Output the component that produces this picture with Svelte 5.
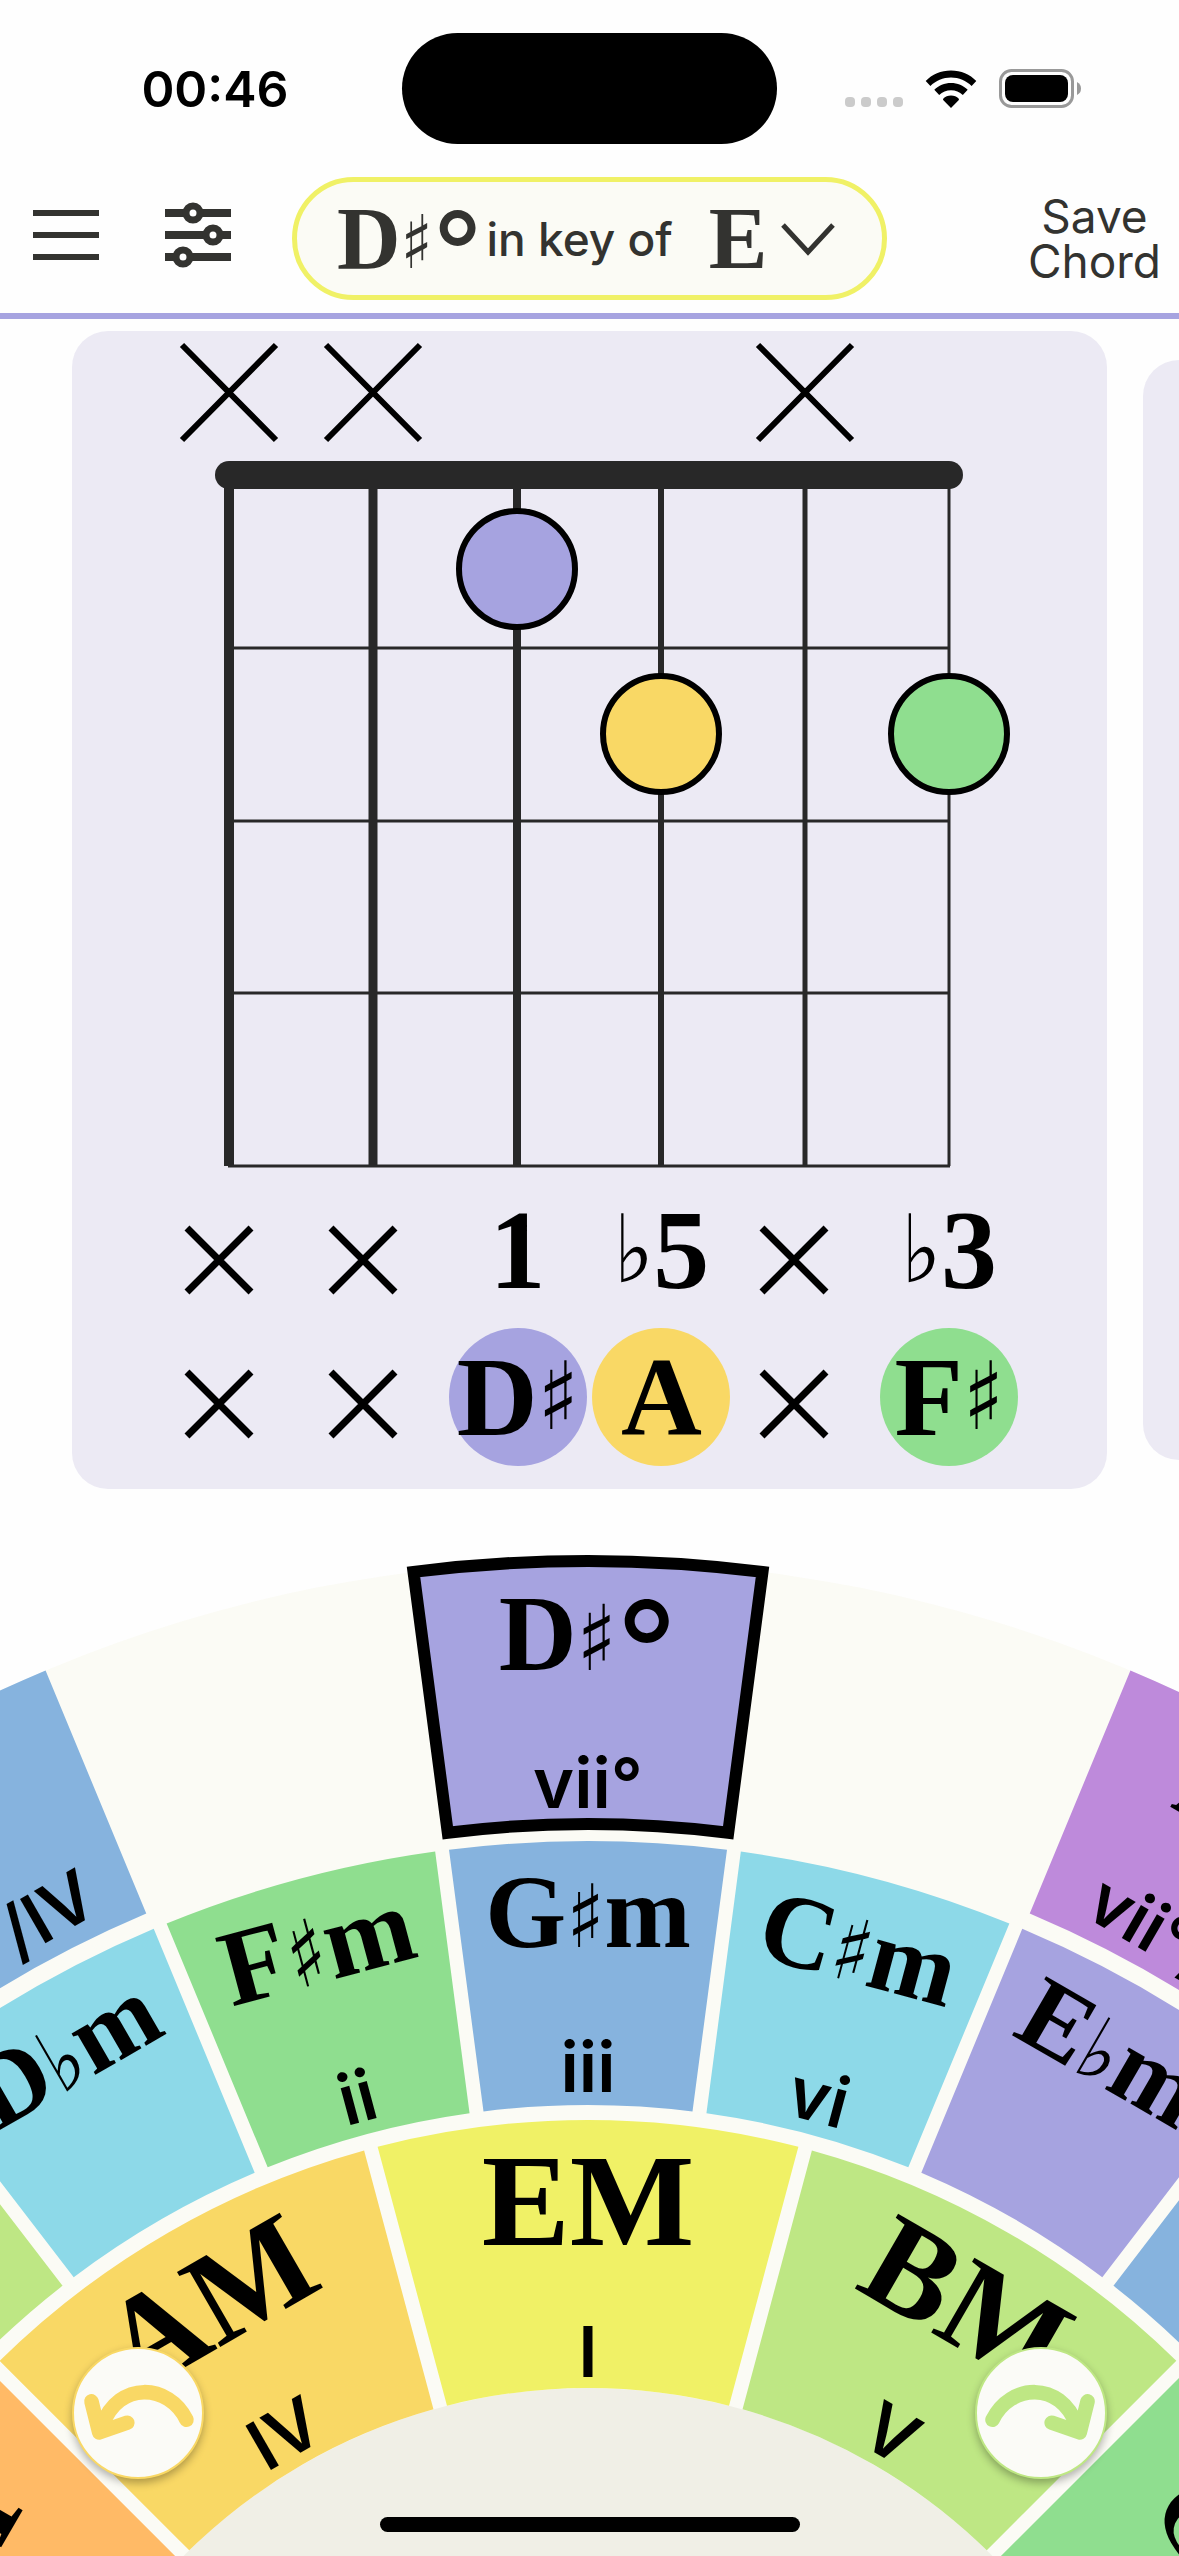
<script>
  const colors = {
    blue: '#86b3de',
    green: '#8fde8f',
    cyan: '#8dd9e8',
    purple: '#a6a3e0',
    yellow: '#f0f166',
    amber: '#f9d865',
    lime: '#bee784',
    orange: '#ffba66',
    violet: '#be8adb'
  };

  // Fretboard
  const strings = [10, 9, 8, 6, 5, 3].map((width, i) => ({ x: 157 + i * 144, width }));
  const frets = [317, 490, 662, 835];
  const muted = [157, 301, 733];
  const fingers = [
    { x: 445, y: 238, color: colors.purple },
    { x: 589, y: 403, color: colors.amber },
    { x: 877, y: 403, color: colors.green }
  ];
  const degrees = [null, null, '1', '♭5', null, '♭3'];
  const notes = [
    null,
    null,
    { name: 'D♯', tone: 'purple' },
    { name: 'A', tone: 'amber' },
    null,
    { name: 'F♯', tone: 'green' }
  ];

  // Chord wheel: rings share the origin as their centre
  const rings = {
    outer: { r0: 1135, r1: 1398, half: 7.5, gap: 8, nameY: -1289, romanY: -1151 },
    middle: { r0: 854, r1: 1118, half: 7.5, gap: 7, nameY: -1012, romanY: -867 },
    inner: { r0: 571, r1: 839, half: 15, gap: 7, nameY: -714, romanY: -582 }
  };
  const segments = [
    { ring: 'inner', angle: -60, color: colors.orange, name: 'DM', size: 'xl' },
    { ring: 'inner', angle: -30, color: colors.amber, name: 'AM', roman: 'IV', size: 'xl' },
    { ring: 'inner', angle: 0, color: colors.yellow, name: 'EM', roman: 'I', size: 'xl' },
    { ring: 'inner', angle: 30, color: colors.lime, name: 'BM', roman: 'V', size: 'xl' },
    { ring: 'inner', angle: 60, color: colors.green, name: 'G♭M', size: 'lg' },
    { ring: 'middle', angle: -45, color: colors.lime },
    { ring: 'middle', angle: -30, color: colors.cyan, name: 'D♭m', size: 'md' },
    { ring: 'middle', angle: -15, color: colors.green, name: 'F♯m', roman: 'ii', size: 'lg' },
    { ring: 'middle', angle: 0, color: colors.blue, name: 'G♯m', roman: 'iii', size: 'md' },
    { ring: 'middle', angle: 15, color: colors.cyan, name: 'C♯m', roman: 'vi', size: 'md' },
    { ring: 'middle', angle: 30, color: colors.purple, name: 'E♭m', size: 'md' },
    { ring: 'middle', angle: 45, color: colors.blue },
    { ring: 'outer', angle: -30, color: colors.blue, roman: 'vii°/IV' },
    { ring: 'outer', angle: 30, color: colors.violet, name: 'A♯°', roman: 'vii°/V', size: 'sm' },
    { ring: 'outer', angle: 0, color: colors.purple, name: 'D♯°', roman: 'vii°', size: 'lg', selected: true }
  ];

  function wedge({ r0, r1, half, gap }) {
    const at = (r, side) => {
      const a = ((half * Math.PI) / 180 - Math.asin(gap / r)) * side;
      return `${(r * Math.sin(a)).toFixed(1)} ${(-r * Math.cos(a)).toFixed(1)}`;
    };
    return `M${at(r1, -1)} A${r1} ${r1} 0 0 1 ${at(r1, 1)} L${at(r0, 1)} A${r0} ${r0} 0 0 0 ${at(r0, -1)} Z`;
  }

  const kinds = { '♯': 'acc', '♭': 'acc', '°': 'ring' };
  const parts = (text) =>
    text
      .split(/([♯♭°])/)
      .filter(Boolean)
      .map((t) => ({ t, kind: kinds[t] ?? 'plain' }));
</script>

{#snippet label(text)}{#each parts(text) as p}<span class={p.kind}>{p.t}</span>{/each}{/snippet}

{#snippet cross()}
  <svg class="cross" viewBox="0 0 70 70" role="img" aria-label="muted">
    <path d="M3 3 L67 67 M67 3 L3 67" />
  </svg>
{/snippet}

<div class="app">
  <div class="status">
    <div class="side time">00:46</div>
    <div class="island"></div>
    <div class="side icons">
      <svg width="58" height="38" viewBox="0 0 58 38" aria-hidden="true">
        {#each [0, 16, 32, 48] as x}
          <rect {x} y="27" width="10" height="10" rx="4" fill="#cbcbcb" />
        {/each}
      </svg>
      <svg width="52" height="38" viewBox="0 0 52 38" aria-hidden="true">
        <path d="M26 0.5 C36 0.5 45 4.4 51.3 11 L46.6 16 C41.2 10.8 34 7.6 26 7.6 C18 7.6 10.8 10.8 5.4 16 L0.7 11 C7 4.4 16 0.5 26 0.5 Z" />
        <path d="M26 13 C32.5 13 38.4 15.6 42.7 19.8 L37.8 25 C34.7 22.1 30.5 20.3 26 20.3 C21.5 20.3 17.3 22.1 14.2 25 L9.3 19.8 C13.6 15.6 19.5 13 26 13 Z" />
        <path d="M26 25.5 C29 25.5 31.8 26.7 33.8 28.7 Q34.3 29.5 33.6 30.2 L26 38 L18.4 30.2 Q17.7 29.5 18.2 28.7 C20.2 26.7 23 25.5 26 25.5 Z" />
      </svg>
      <svg width="82" height="40" viewBox="0 0 82 40" aria-hidden="true">
        <rect x="1.5" y="1.5" width="72" height="36" rx="11" fill="none" stroke="#999" stroke-width="3" />
        <rect x="6" y="6" width="63" height="27" rx="8" />
        <path d="M78 13 Q82 15 82 19.5 Q82 24 78 26 Z" fill="#999" />
      </svg>
    </div>
  </div>

  <header>
    <button class="icon" aria-label="Menu">
      <svg width="66" height="66" viewBox="0 0 66 66">
        <path d="M0 11 H66 M0 33 H66 M0 55 H66" stroke="#333330" stroke-width="6" />
      </svg>
    </button>
    <button class="icon" aria-label="Settings">
      <svg width="66" height="66" viewBox="0 0 66 66" overflow="visible">
        <path d="M0 11 H66 M0 33 H66 M0 55 H66" stroke="#333330" stroke-width="8" />
        <g fill="#fff" stroke="#333330" stroke-width="7">
          <circle cx="28" cy="11" r="7" />
          <circle cx="48" cy="33" r="7" />
          <circle cx="18" cy="55" r="7" />
        </g>
      </svg>
    </button>
    <button class="key">
      <span class="chord">{@render label('D♯°')}</span>
      <span class="words">in key of</span>
      <span class="chord">E</span>
      <svg class="chevron" width="56" height="36" viewBox="0 0 56 36" aria-hidden="true">
        <path d="M3 4 L28 31 L53 4" fill="none" stroke="#333330" stroke-width="5" />
      </svg>
    </button>
    <button class="save">Save<br />Chord</button>
  </header>

  <main>
    <section class="cards">
      <article class="card">
        <svg class="board" viewBox="0 0 1035 857" role="img" aria-label="Chord diagram">
          {#each muted as x}
            <path d="M{x - 47} 14 L{x + 47} 109 M{x + 47} 14 L{x - 47} 109" stroke="#000" stroke-width="6" />
          {/each}
          {#each strings as s}
            <path d="M{s.x} 144 V835" stroke="#282828" stroke-width={s.width} />
          {/each}
          {#each frets as y}
            <path d="M156 {y} H878" stroke="#282828" stroke-width="3" />
          {/each}
          <rect x="143" y="130" width="748" height="28" rx="14" fill="#282828" />
          {#each fingers as f}
            <circle cx={f.x} cy={f.y} r="58" fill={f.color} stroke="#000" stroke-width="6" />
          {/each}
        </svg>
        <div class="row degrees">
          {#each degrees as d}
            {#if d}
              <div class="cell degree">{@render label(d)}</div>
            {:else}
              <div class="cell mute">{@render cross()}</div>
            {/if}
          {/each}
        </div>
        <div class="row notes">
          {#each notes as n}
            {#if n}
              <div class="cell"><div class="note {n.tone}">{@render label(n.name)}</div></div>
            {:else}
              <div class="cell mute">{@render cross()}</div>
            {/if}
          {/each}
        </div>
      </article>
      <article class="card next" aria-label="Next voicing"></article>
    </section>

    <section class="wheel">
      <svg class="dial" viewBox="-588 -1419 1179 1016" role="img" aria-label="Chord wheel">
        <circle r="1398" fill="#fbfbf5" />
        <circle r="571" fill="#f0efe6" />
        {#each segments as s}
          {@const ring = rings[s.ring]}
          <g transform="rotate({s.angle})">
            <path class:selected={s.selected} d={wedge(ring)} fill={s.color} />
            {#if s.name}
              <text class="name {s.size}" y={ring.nameY}>{#each parts(s.name) as p}<tspan class={p.kind}>{p.t}</tspan>{/each}</text>
            {/if}
            {#if s.roman}
              <text class="roman" y={ring.romanY}>{s.roman}</text>
            {/if}
          </g>
        {/each}
      </svg>
      <button class="turn left" aria-label="Rotate left">
        <svg viewBox="-66 -66 132 132">
          <path d="M50 7 C32 -30 -20 -34 -37 13 M-48 -12 L-40 20 L-11 10" />
        </svg>
      </button>
      <button class="turn right" aria-label="Rotate right">
        <svg viewBox="-66 -66 132 132">
          <path d="M-50 7 C-32 -30 20 -34 37 13 M48 -12 L40 20 L11 10" />
        </svg>
      </button>
      <div class="home"></div>
    </section>
  </main>
</div>

<style>
  :global(body) {
    background: #fefefe;
  }

  .app {
    font-family: Inter, 'Liberation Sans', sans-serif;
    color: #000;
    overflow: hidden;
  }

  button {
    border: 0;
    padding: 0;
    background: none;
    font: inherit;
    color: #333330;
    cursor: pointer;
  }

  svg {
    display: block;
  }

  .status {
    display: grid;
    grid-template-columns: 1fr 375px 1fr;
    align-items: center;
    height: 177px;
  }

  .island {
    height: 111px;
    border-radius: 56px;
    background: #000;
  }

  .side {
    display: flex;
    align-items: center;
    justify-content: center;
  }

  .time {
    padding-left: 28px;
    font-size: 50px;
    font-weight: 600;
    line-height: 60px;
  }

  .icons {
    gap: 22px;
    padding-right: 30px;
  }

  header {
    display: flex;
    align-items: center;
    padding: 0 18px 13px 33px;
    border-bottom: 6px solid #a6a3e0;
  }

  .icon {
    margin-right: 66px;
    padding-bottom: 8px;
  }

  .icon + .icon {
    margin-right: 61px;
  }

  .key {
    display: flex;
    align-items: center;
    width: 595px;
    height: 123px;
    padding: 0 46px 0 40px;
    box-sizing: border-box;
    border: 5px solid #f0f166;
    border-radius: 62px;
    background: #fbfbf5;
  }

  .chord {
    font-family: 'Liberation Serif', serif;
    font-weight: 700;
    font-size: 88px;
    line-height: 112px;
    white-space: nowrap;
  }

  .words {
    margin: 0 36px 0 4px;
    font-size: 46px;
    font-weight: 500;
    line-height: 56px;
    white-space: nowrap;
  }

  .chevron {
    margin-left: auto;
  }

  .save {
    margin-left: auto;
    font-size: 46px;
    line-height: 45px;
    text-align: center;
  }

  .acc {
    font-family: 'DejaVu Sans Condensed', 'DejaVu Sans', sans-serif;
    font-weight: 400;
    font-stretch: condensed;
    font-size: 84%;
    line-height: 0;
  }

  .ring {
    font-family: Inter, sans-serif;
    font-weight: 400;
    font-size: 124%;
    line-height: 0;
  }

  span.ring {
    vertical-align: -0.2em;
  }

  tspan.ring {
    baseline-shift: -0.2em;
  }

  .cards {
    display: flex;
    align-items: center;
    gap: 36px;
    padding: 12px 0 0 72px;
  }

  .card {
    flex: 0 0 calc(100% - 72px);
    padding-bottom: 23px;
    border-radius: 36px;
    background: #eceaf4;
  }

  .next {
    height: 1100px;
    padding: 0;
  }

  .board {
    width: 100%;
  }

  .row {
    display: grid;
    grid-template-columns: repeat(6, 1fr);
    padding: 0 86px;
    font-family: 'Liberation Serif', serif;
    font-size: 112px;
    font-weight: 700;
    text-align: center;
    white-space: nowrap;
  }

  .cell {
    display: flex;
    align-items: center;
    justify-content: center;
  }

  .degrees {
    height: 140px;
    line-height: 124px;
  }

  .degree {
    padding-bottom: 16px;
  }

  .notes {
    height: 138px;
    line-height: 138px;
  }

  .mute {
    padding: 4px 22px 0 0;
  }

  .notes .mute {
    padding-top: 14px;
  }

  .cross {
    width: 70px;
    height: 70px;
  }

  .cross path {
    stroke: #000;
    stroke-width: 7;
  }

  .note {
    display: flex;
    justify-content: center;
    width: 138px;
    height: 138px;
    border-radius: 50%;
  }

  .note .acc {
    line-height: 138px;
  }

  .purple {
    background: #a6a3e0;
  }

  .amber {
    background: #f9d865;
  }

  .green {
    background: #8fde8f;
  }

  .wheel {
    position: relative;
    margin-top: 51px;
  }

  .dial {
    width: 100%;
  }

  .selected {
    stroke: #000;
    stroke-width: 12;
  }

  text {
    text-anchor: middle;
  }

  .name {
    font-family: 'Liberation Serif', serif;
    font-weight: 700;
  }

  .sm {
    font-size: 88px;
  }

  .md {
    font-size: 104px;
  }

  .lg {
    font-size: 108px;
  }

  .xl {
    font-size: 132px;
  }

  .roman {
    font-size: 70px;
    font-weight: 600;
  }

  .turn {
    position: absolute;
    bottom: 77px;
    width: 132px;
    height: 132px;
    box-sizing: border-box;
    border: 2px solid;
    border-radius: 50%;
    background: #fbfbf7;
    box-shadow: 0 4px 8px rgba(0, 0, 0, 0.3);
  }

  .turn path {
    fill: none;
    stroke: currentColor;
    stroke-width: 15;
    stroke-linecap: round;
    stroke-linejoin: round;
  }

  .left {
    left: 72px;
    color: #f9d865;
  }

  .right {
    right: 72px;
    color: #bee784;
  }

  .home {
    position: absolute;
    bottom: 24px;
    left: 50%;
    width: 420px;
    height: 15px;
    margin-left: -210px;
    border-radius: 8px;
    background: #000;
  }
</style>
